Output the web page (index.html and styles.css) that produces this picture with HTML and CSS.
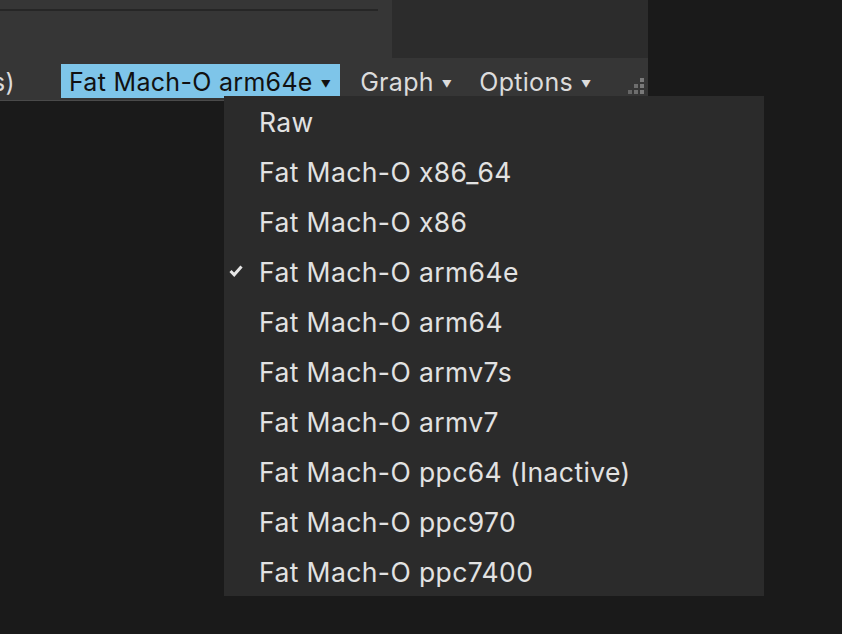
FILE: index.html
```html
<!DOCTYPE html>
<html>
<head>
<meta charset="utf-8">
<link rel="stylesheet" href="styles.css">
</head>
<body>
<div class="window">
  <div class="top">
    <div class="top-left"><div class="rule"></div></div>
    <div class="top-right"></div>
  </div>
  <div class="bar">
    <span class="item cut">s)</span>
    <span class="item active">Fat Mach-O arm64e<span class="arrow">▼</span></span>
    <span class="item graph">Graph<span class="arrow">▼</span></span>
    <span class="item">Options<span class="arrow">▼</span></span>
    <svg class="grip" width="18" height="16" viewBox="0 0 18 16">
      <rect x="12" y="0" width="4" height="4" fill="#7a7a7a"/>
      <rect x="6" y="6" width="4" height="4" fill="#6e6e6e"/>
      <rect x="12" y="6" width="4" height="4" fill="#7a7a7a"/>
      <rect x="0" y="12" width="4" height="4" fill="#666"/>
      <rect x="6" y="12" width="4" height="4" fill="#6e6e6e"/>
      <rect x="12" y="12" width="4" height="4" fill="#7a7a7a"/>
    </svg>
  </div>
</div>
<ul class="menu">
  <li>Raw</li>
  <li>Fat Mach-O x86_64</li>
  <li>Fat Mach-O x86</li>
  <li class="checked"><svg class="check" width="14" height="12" viewBox="0 0 14 12"><path d="M1.5 6 L5.2 9.8 L12.5 1.5" fill="none" stroke="#e6e6e6" stroke-width="3"/></svg>Fat Mach-O arm64e</li>
  <li>Fat Mach-O arm64</li>
  <li>Fat Mach-O armv7s</li>
  <li>Fat Mach-O armv7</li>
  <li>Fat Mach-O ppc64 (Inactive)</li>
  <li>Fat Mach-O ppc970</li>
  <li>Fat Mach-O ppc7400</li>
</ul>
</body>
</html>
```
FILE: styles.css
```css
html, body {
  margin: 0;
  padding: 0;
}
body {
  background: #1a1a1a;
  width: 842px;
  height: 634px;
  overflow: hidden;
  font-family: Inter, "Noto Sans", sans-serif;
  position: relative;
}
.window {
  width: 648px;
  display: flex;
  flex-direction: column;
}
.top {
  height: 58px;
  display: flex;
}
.top-left {
  width: 392px;
  background: #363636;
  padding-top: 9px;
  box-sizing: border-box;
}
.rule {
  width: 378px;
  height: 2px;
  background: #262626;
}
.top-right {
  flex: 1;
  background: #2c2c2c;
}
.bar {
  height: 42px;
  background: #363636;
  border-bottom: 1px solid #4a4a4a;
  display: flex;
  align-items: flex-start;
  position: relative;
  font-size: 25px;
  letter-spacing: 0.3px;
  color: #dcdcdc;
}
.item {
  height: 34px;
  margin-top: 6px;
  line-height: 36px;
  padding: 0 8px;
  white-space: nowrap;
}
.cut {
  margin-left: -8px;
  margin-right: 46px;
  padding: 0;
}
.active {
  background: #7ec5e9;
  color: #111;
  padding: 0 9px 0 8px;
  margin-right: 12px;
}
.graph {
  margin-right: 11px;
}
.arrow {
  font-size: 10px;
  vertical-align: 3px;
  margin-left: 8px;
}
.grip {
  position: absolute;
  right: 2px;
  top: 20px;
}
.menu {
  position: absolute;
  left: 224px;
  top: 96px;
  width: 540px;
  margin: 0;
  padding: 0;
  list-style: none;
  background: #2b2b2b;
  font-size: 26.5px;
  letter-spacing: 0.4px;
  color: #e2e2e2;
}
.menu li {
  height: 50px;
  line-height: 52px;
  padding-left: 35px;
  position: relative;
  white-space: nowrap;
}
.check {
  position: absolute;
  left: 5px;
  top: 19px;
}
```
